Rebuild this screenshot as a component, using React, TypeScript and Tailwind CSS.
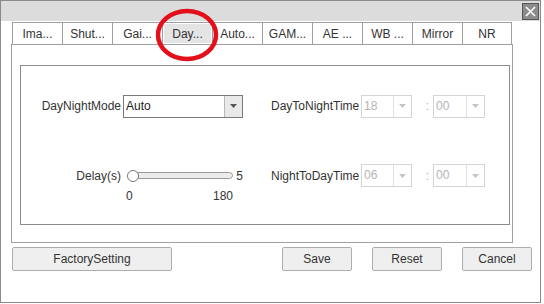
import { useState } from 'react';

const tabs = ['Ima...', 'Shut...', 'Gai...', 'Day...', 'Auto...', 'GAM...', 'AE ...', 'WB ...', 'Mirror', 'NR'];

function Arrow({ disabled }: { disabled?: boolean }) {
  return (
    <svg width="7" height="4" viewBox="0 0 7 4">
      <path d="M0 0h7L3.5 4z" fill={disabled ? '#c4c4c4' : '#555'} />
    </svg>
  );
}

function Select({ value, width, disabled }: { value: string; width: string; disabled?: boolean }) {
  return (
    <div
      className={`flex h-[23px] ${width} border ${
        disabled ? 'border-[#d4d4d4] text-[#b4b4b4]' : 'border-[#7a7a7a] text-[#222]'
      } bg-white`}
    >
      <span className="flex-1 pl-[2px] leading-[21px]">{value}</span>
      <span
        className={`flex w-[18px] items-center justify-center border-l ${
          disabled ? 'border-[#e0e0e0] bg-white' : 'border-[#b8b8b8] bg-[#e9e9e9]'
        }`}
      >
        <Arrow disabled={disabled} />
      </span>
    </div>
  );
}

function Button({ label, width }: { label: string; width: string }) {
  return (
    <button
      type="button"
      className={`${width} h-[24px] rounded-[2px] border border-[#adadad] bg-[#efefef] text-[12px] text-[#333]`}
    >
      {label}
    </button>
  );
}

export default function App() {
  const [active, setActive] = useState(3);

  return (
    <div
      className="relative h-[304px] w-[544px] bg-white text-[12px] text-[#333]"
      style={{ fontFamily: '"Liberation Sans", Arial, sans-serif' }}
    >
      <div className="h-[303px] w-[541px] border border-[#8a8a8a] bg-white">
        {/* title bar */}
        <div className="flex h-[20px] items-center justify-end bg-[#dcdcdc] pr-[1px]">
          <button
            type="button"
            className="flex h-[17px] w-[17px] items-center justify-center border border-[#555] bg-[#8c8c8c]"
          >
            <svg width="11" height="11" viewBox="0 0 11 11">
              <path d="M1 1l9 9M10 1l-9 9" stroke="#fff" strokeWidth="1.6" />
            </svg>
          </button>
        </div>

        {/* tabs */}
        <div className="ml-[11px] mt-[1px] flex h-[22px]">
          {tabs.map((t, i) => (
            <div
              key={t}
              onClick={() => setActive(i)}
              className={`flex h-[22px] w-[50px] items-stretch border-l border-t border-[#a0a0a0] p-[1px] ${
                i === tabs.length - 1 ? 'border-r' : ''
              }`}
            >
              <span
                className={`flex flex-1 items-center justify-center ${
                  i === active ? 'bg-[#e4e4e4]' : 'bg-white'
                }`}
              >
                {t}
              </span>
            </div>
          ))}
        </div>

        {/* panel */}
        <div className="ml-[10px] h-[199px] w-[502px] border border-[#a0a0a0] pl-[8px] pt-[20px]">
          <div className="h-[160px] w-[490px] border border-[#8c8c8c] pt-[29px]">
            <div className="flex h-[22px] items-center">
              <span className="w-[100px] text-right">DayNightMode</span>
              <div className="ml-[2px]">
                <Select value="Auto" width="w-[120px]" />
              </div>
              <span className="ml-[28px] w-[90px]">DayToNightTime</span>
              <Select value="18" width="w-[51px]" disabled />
              <span className="w-[21px] pr-[4px] text-right text-[#b4b4b4]">:</span>
              <Select value="00" width="w-[52px]" disabled />
            </div>

            <div className="mt-[47px] flex items-start">
              <span className="flex h-[23px] w-[100px] items-center justify-end">Delay(s)</span>
              <div className="ml-[2px] flex w-[120px] flex-col">
                <div className="flex h-[23px] items-center">
                  <div className="relative ml-[4px] flex h-[12px] w-[106px] items-center">
                    <div className="ml-[5px] h-[7px] flex-1 rounded-full border border-[#9a9a9a] bg-[#ececec]" />
                    <div className="absolute left-0 top-0 h-[12px] w-[12px] rounded-full border border-[#777] bg-white" />
                  </div>
                  <span className="ml-auto">5</span>
                </div>
                <div className="flex w-[110px] justify-between pl-[3px] pt-[2px] leading-[14px]">
                  <span>0</span>
                  <span>180</span>
                </div>
              </div>
              <span className="ml-[28px] flex h-[23px] w-[90px] items-center">NightToDayTime</span>
              <Select value="06" width="w-[51px]" disabled />
              <span className="flex h-[23px] w-[21px] items-center justify-end pr-[4px] text-[#b4b4b4]">:</span>
              <Select value="00" width="w-[52px]" disabled />
            </div>
          </div>
        </div>

        {/* buttons */}
        <div className="ml-[11px] mt-[4px] flex">
          <Button label="FactorySetting" width="w-[160px]" />
          <div className="ml-[110px]">
            <Button label="Save" width="w-[70px]" />
          </div>
          <div className="ml-[20px]">
            <Button label="Reset" width="w-[70px]" />
          </div>
          <div className="ml-[20px]">
            <Button label="Cancel" width="w-[70px]" />
          </div>
        </div>
      </div>

      {/* red annotation circle */}
      <svg className="pointer-events-none absolute left-0 top-0" width="544" height="304">
        <ellipse cx="187" cy="35" rx="29" ry="24" fill="none" stroke="#e3101b" strokeWidth="4.5" />
      </svg>
    </div>
  );
}
